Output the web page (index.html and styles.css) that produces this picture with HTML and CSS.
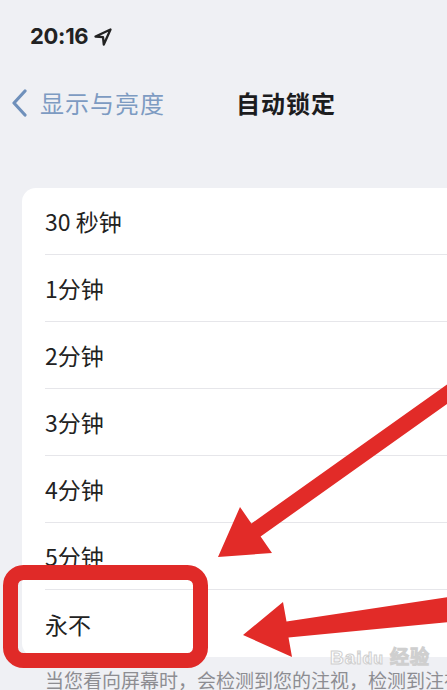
FILE: index.html
```html
<!DOCTYPE html>
<html lang="zh-CN">
<head>
    <meta charset="UTF-8">
    <meta name="viewport" content="width=device-width, initial-scale=1.0">
    <title>自动锁定</title>
    <link rel="stylesheet" href="styles.css">
</head>
<body>
    <div class="screen">
        <div class="status-bar">
            <span class="time">20:16</span>
            <svg class="location" viewBox="0 0 20 20" width="20" height="20">
                <polygon points="17.5,2.5 2.5,9.5 10,10.2 10.8,17.5" fill="none" stroke="#222" stroke-width="2.3" stroke-linejoin="round"/>
            </svg>
        </div>

        <div class="nav-bar">
            <a class="back" href="#">
                <svg class="chevron" viewBox="0 0 18 28" width="18" height="28">
                    <polyline points="15,2 4,14 15,26" fill="none" stroke="#6f90bb" stroke-width="3.2" stroke-linecap="round" stroke-linejoin="round"/>
                </svg>
                <span>显示与亮度</span>
            </a>
            <h1 class="title">自动锁定</h1>
        </div>

        <ul class="options">
            <li>30 秒钟</li>
            <li>1分钟</li>
            <li>2分钟</li>
            <li>3分钟</li>
            <li>4分钟</li>
            <li>5分钟</li>
            <li>永不</li>
        </ul>

        <p class="footnote">当您看向屏幕时，会检测到您的注视，检测到注视后将不会锁定屏幕。</p>

        <!-- 标注：红框和箭头 -->
        <svg class="marks" viewBox="0 0 447 690" width="447" height="690">
            <rect x="10.5" y="572.5" width="190" height="88" rx="13" fill="none" stroke="#e02a28" stroke-width="15"/>
            <polygon points="218,557 240,507 251.4,523.5 465.4,371.5 474.6,384.5 260.6,536.5 272,553" fill="#e22b28"/>
            <polygon points="243,635 283,602 286.5,621.6 468.4,594 471.6,619.8 288.5,637.4 292,657" fill="#e22b28"/>
        </svg>
        <span class="watermark">Bai<b>du</b> 经验</span>
    </div>
</body>
</html>
```

FILE: styles.css
```css
/* Mise en page générale */
html, body {
    margin: 0;
    padding: 0;
    height: 690px;
    overflow: hidden;
}

body {
    background: #eff0f4;
    font-family: "Noto Sans CJK SC", "Noto Sans", sans-serif;
    color: #222;
}

.screen {
    position: relative;
    height: 690px;
    overflow: hidden;
}

.status-bar {
    height: 72px;
    display: flex;
    align-items: center;
    padding-left: 30px;
    gap: 5px;
}

.time {
    font-family: "Inter", "Liberation Sans", sans-serif;
    font-weight: 700;
    font-size: 22px;
    letter-spacing: -0.3px;
    color: #222;
}

.location {
    margin-top: 1px;
}

.nav-bar {
    height: 60px;
    display: flex;
    align-items: center;
    padding-left: 10px;
}

.back {
    display: flex;
    align-items: center;
    gap: 12px;
    text-decoration: none;
    color: #7d9bc2;
    font-size: 24px;
    letter-spacing: 1px;
}

.chevron {
    margin-top: 1px;
}

.title {
    margin: 0 0 0 71px;
    font-size: 24px;
    font-weight: 700;
    letter-spacing: 1px;
    color: #1c1c1e;
}

.options {
    list-style: none;
    margin: 56px 0 0 22px;
    padding: 0 0 0 23px;
    background: #fff;
    border-radius: 14px 0 0 14px;
}

.options li {
    height: 67px;
    display: flex;
    align-items: center;
    font-size: 23px;
    border-bottom: 1px solid #e6e6ea;
    box-sizing: border-box;
}

.options li:last-child {
    border-bottom: none;
}

.footnote {
    margin: 10px 0 0 45px;
    font-size: 19px;
    line-height: 1.4;
    color: #8d8d92;
    white-space: nowrap;
    overflow: hidden;
}

.marks {
    position: absolute;
    top: 0;
    left: 0;
    pointer-events: none;
}

.watermark {
    position: absolute;
    left: 330px;
    top: 642px;
    font-family: "Liberation Sans", sans-serif;
    font-size: 19px;
    font-weight: 700;
    color: rgba(255, 255, 255, 0.9);
    -webkit-text-stroke: 1px #cfcfcf;
    letter-spacing: 1px;
}

.watermark b {
    font-size: 16px;
}
```
